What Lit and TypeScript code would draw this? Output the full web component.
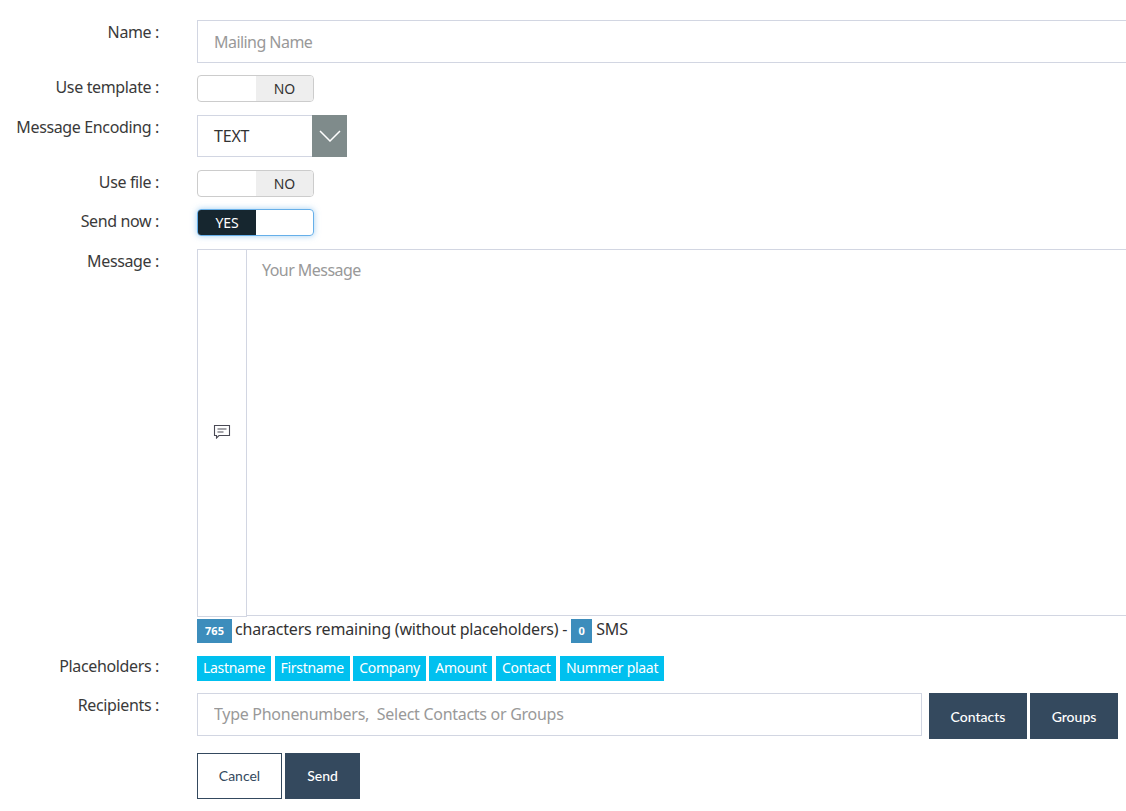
import { LitElement, html, css } from "lit";
import { customElement } from "lit/decorators.js";

@customElement("app-root")
export class AppRoot extends LitElement {
  static styles = css`
    :host {
      display: block;
      width: 100%;
      height: 811px;
      overflow: hidden;
      background: #fff;
      font-family: "Noto Sans", sans-serif;
      color: #333;
    }
    * { box-sizing: border-box; }
    .form {
      display: grid;
      grid-template-columns: 159px 1fr;
      column-gap: 38px;
      padding-top: 20px;
      align-items: start;
    }
    .label {
      text-align: right;
      font-size: 16px;
      letter-spacing: -0.36px;
      line-height: 24px;
      color: #3a3a3a;
      white-space: nowrap;
    }
    .field { min-width: 0; }
    .mb12 { margin-bottom: 12px; }
    .mb13 { margin-bottom: 13px; }
    .mt14 { margin-top: 14px; }
    .input {
      display: block;
      height: 43px;
      width: 960px;
      border: 1px solid #d2d6e2;
      padding: 0 16px;
      font: inherit;
      font-size: 16px;
      letter-spacing: -0.55px;
      color: #333;
      outline: none;
      background: #fff;
    }
    .input::placeholder { color: #999; opacity: 1; }
    .toggle {
      display: flex;
      width: 117px;
      height: 27px;
      border: 1px solid #ccc;
      border-radius: 4px;
      overflow: hidden;
      font-size: 14px;
      letter-spacing: -0.1px;
      line-height: 25px;
    }
    .toggle span { text-align: center; }
    .toggle .left { width: 58px; flex: none; }
    .toggle .right { flex: 1; }
    .toggle .no { background: #eee; color: #333; }
    .toggle .yes { background: #16262f; color: #fff; }
    .toggle.on {
      border-color: #66afe9;
      box-shadow: 0 0 6px rgba(102, 175, 233, 0.6);
    }
    .select { display: flex; width: 150px; height: 42px; }
    .select .value {
      flex: 1;
      border: 1px solid #d2d6e2;
      border-right: 0;
      padding-left: 16px;
      font-size: 16px;
      letter-spacing: -0.2px;
      line-height: 40px;
    }
    .select .arrow {
      width: 35px;
      background: #7f8b8b;
      display: flex;
      align-items: center;
      justify-content: center;
    }
    .message { display: flex; width: 960px; height: 367px; }
    .addon {
      width: 50px;
      height: 368px;
      flex: none;
      border: 1px solid #d2d6e2;
      display: flex;
      align-items: center;
      justify-content: center;
      padding-bottom: 4px;
    }
    textarea.input {
      flex: 1;
      height: 367px;
      border-left: 0;
      padding: 8px 15px;
      resize: none;
      line-height: 24px;
    }
    .status {
      display: flex;
      align-items: center;
      height: 24px;
      margin-top: 3px;
      margin-bottom: 11px;
      font-size: 16px;
      letter-spacing: -0.2px;
      color: #333;
      white-space: nowrap;
    }
    .status .txt { margin-bottom: 4px; }
    .badge {
      background: #3c8dbc;
      color: #fff;
      font-size: 11px;
      font-weight: 700;
      letter-spacing: 0;
      height: 24px;
      line-height: 24px;
      text-align: center;
      flex: none;
    }
    .b1 { width: 35px; margin-right: 3px; }
    .b2 { width: 21px; margin: 0 4px; }
    .tags { display: flex; gap: 3.5px; padding-top: 2px; }
    .tag {
      height: 25px;
      line-height: 24px;
      padding: 0 6px;
      background: #00c0ef;
      color: #fff;
      font-size: 14px;
      letter-spacing: -0.3px;
      white-space: nowrap;
    }
    .recipients { display: flex; align-items: flex-start; }
    .recipients .input {
      width: 725px;
      flex: none;
      margin-right: 7px;
      padding-bottom: 2px;
      letter-spacing: -0.28px;
    }
    .btn {
      display: flex;
      align-items: center;
      justify-content: center;
      height: 46px;
      background: #34495e;
      color: #fff;
      font-family: "Lato", sans-serif;
      font-size: 14px;
      font-weight: 500;
      border: 1px solid #34495e;
      flex: none;
    }
    .actions { display: flex; gap: 3px; }
    .actions .btn { padding-bottom: 2px; }
    .btn.outline { background: #fff; color: #34495e; font-weight: 400; }
    .contacts { width: 98px; margin-right: 3px; }
    .groups { width: 88px; }
    .cancel { width: 85px; }
    .send { width: 75px; }
  `;

  render() {
    return html`
      <div class="form">
        <div class="label">Name :</div>
        <div class="field mb12"><input class="input" placeholder="Mailing Name" /></div>

        <div class="label">Use template :</div>
        <div class="field mb13"><div class="toggle"><span class="left"></span><span class="right no">NO</span></div></div>

        <div class="label">Message Encoding :</div>
        <div class="field mb13">
          <div class="select">
            <div class="value">TEXT</div>
            <div class="arrow">
              <svg width="22" height="12" viewBox="0 0 22 12" fill="none" stroke="#fff" stroke-width="1.5">
                <path d="M1 1l10 10L21 1" />
              </svg>
            </div>
          </div>
        </div>

        <div class="label">Use file :</div>
        <div class="field mb12"><div class="toggle"><span class="left"></span><span class="right no">NO</span></div></div>

        <div class="label">Send now :</div>
        <div class="field mb13"><div class="toggle on"><span class="left yes">YES</span><span class="right"></span></div></div>

        <div class="label">Message :</div>
        <div class="field">
          <div class="message">
            <div class="addon">
              <svg width="18" height="15" viewBox="0 0 18 15" fill="none" stroke="#4a4a55" stroke-width="1.1">
                <path d="M1.5 1.5h15v10H6l-2.5 2.5v-2.5h-2z" />
                <path d="M4.5 5h9M4.5 8h6" />
              </svg>
            </div>
            <textarea class="input" placeholder="Your Message"></textarea>
          </div>
          <div class="status">
            <span class="badge b1">765</span><span class="txt">characters remaining (without placeholders) -</span><span class="badge b2">0</span><span class="txt">SMS</span>
          </div>
        </div>

        <div class="label">Placeholders :</div>
        <div class="field mb12">
          <div class="tags">
            ${["Lastname", "Firstname", "Company", "Amount", "Contact", "Nummer plaat"].map(
              (t) => html`<span class="tag">${t}</span>`
            )}
          </div>
        </div>

        <div class="label">Recipients :</div>
        <div class="field">
          <div class="recipients">
            <input class="input" placeholder="Type Phonenumbers,  Select Contacts or Groups" />
            <div class="btn contacts">Contacts</div>
            <div class="btn groups">Groups</div>
          </div>
        </div>

        <div></div>
        <div class="field mt14">
          <div class="actions">
            <div class="btn outline cancel">Cancel</div>
            <div class="btn send">Send</div>
          </div>
        </div>
      </div>
    `;
  }
}
